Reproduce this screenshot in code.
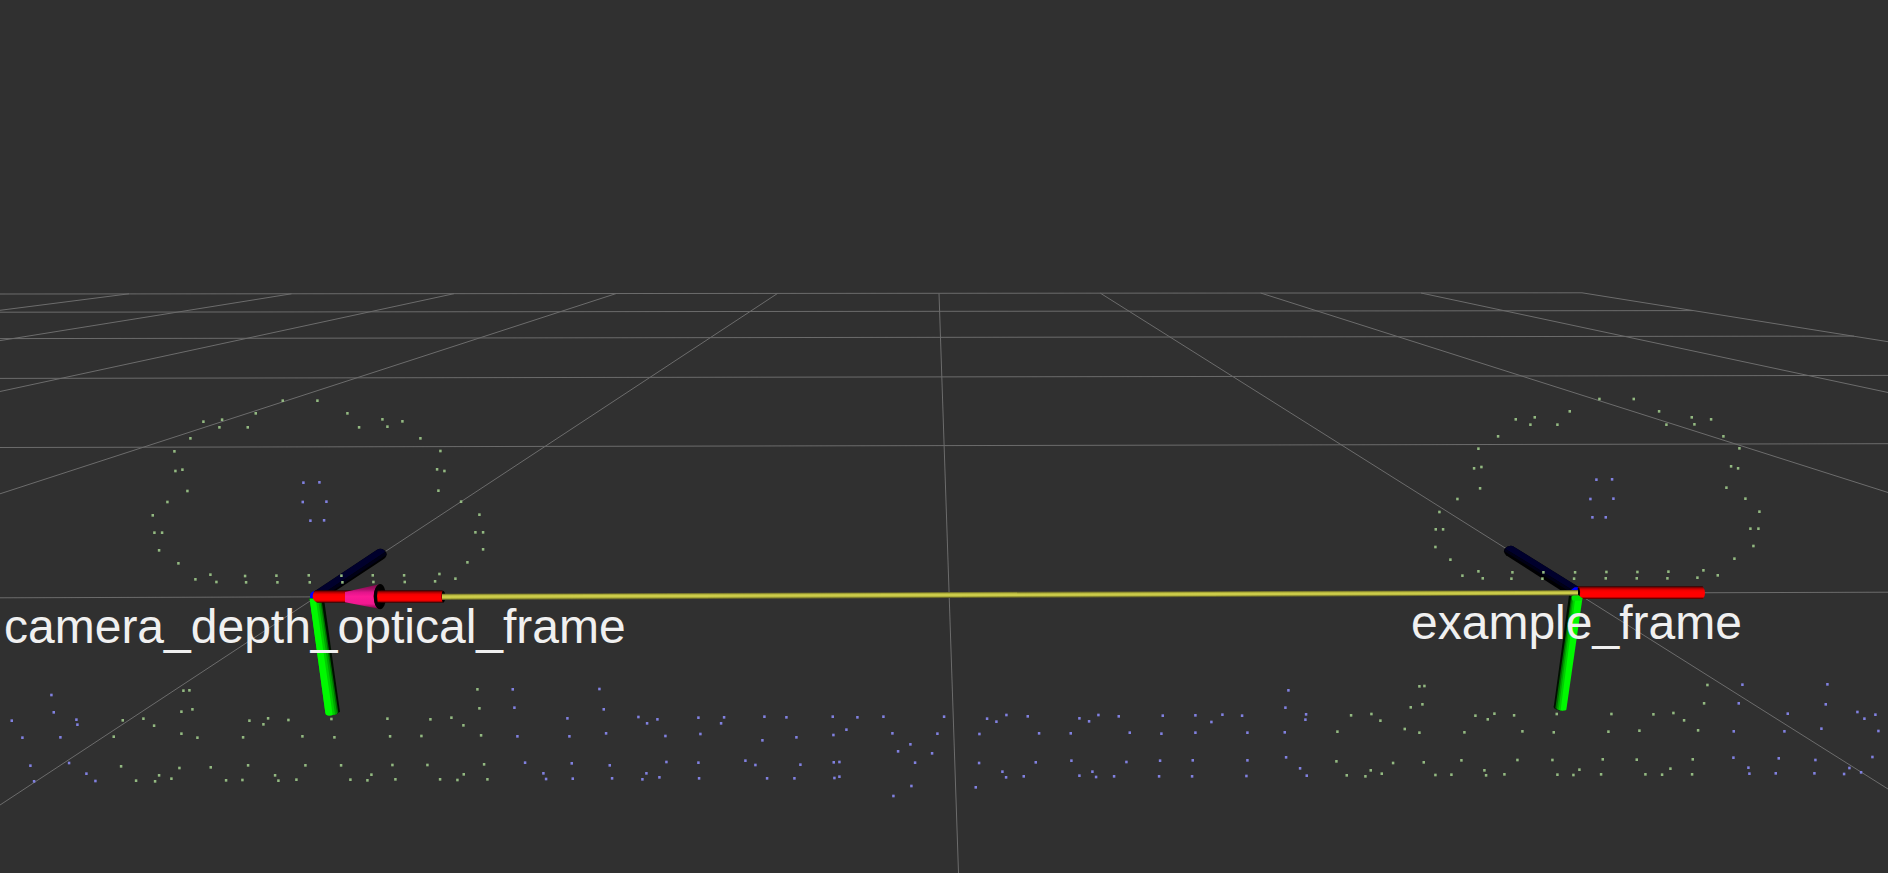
type Point = [number, number];

type Patch = {
  origin: Point;
  green: Point[];
  blue: Point[];
};

const GRID: [number, number, number, number][] = [
  // rows, far to near
  [0, 294, 1582, 292.8],
  [0, 312.2, 1693, 310.6],
  [0, 338.6, 1854, 336.1],
  [0, 378.4, 1888, 375.4],
  [0, 447.5, 1888, 443.7],
  [0, 597.8, 1888, 592.2],
  // columns, left to right
  [129, 293.8, 0, 310.3],
  [291.5, 293.8, 0, 340.6],
  [454, 293.7, 0, 391.5],
  [616, 293.6, 0, 493.8],
  [777.6, 293.4, 0, 805],
  [939, 293.3, 958.5, 873],
  [1100.4, 293.2, 1888, 789],
  [1260.6, 293, 1888, 492.5],
  [1421, 293, 1888, 392.5],
  [1582, 292.8, 1888, 341.7],
];

// Samples are stored in thirds of a pixel from the patch origin.
const PATCHES: Patch[] = [
  {
    origin: [130, 380],
    green: [
      [458, 62], [562, 62], [377, 100], [276, 119], [220, 125], [268, 142], [353, 142], [181, 175],
      [652, 100], [687, 142], [757, 118], [772, 140], [817, 124], [871, 175], [133, 214], [931, 213],
      [136, 273], [157, 269], [921, 268], [943, 273], [172, 333], [925, 332], [112, 366], [993, 365],
      [68, 406], [1048, 404], [73, 458], [96, 458], [1036, 457], [1059, 457], [87, 511], [1059, 508],
      [145, 550], [1012, 547], [196, 598], [241, 584], [259, 606], [345, 588], [348, 607], [439, 587],
      [442, 607], [536, 586], [539, 607], [634, 587], [637, 607], [728, 586], [730, 606], [822, 586],
      [824, 606], [928, 582], [915, 604], [976, 596],
    ],
    blue: [[520, 308], [568, 307], [518, 366], [589, 365], [541, 422], [582, 421]],
  },
  {
    origin: [1400, 380],
    green: [
      [598, 57], [701, 57], [509, 94], [404, 112], [347, 118], [391, 134], [472, 134], [294, 169],
      [777, 94], [799, 134], [875, 112], [883, 133], [933, 118], [970, 169], [235, 206], [1018, 205],
      [222, 265], [244, 261], [993, 259], [1014, 265], [240, 325], [979, 323], [172, 357], [1036, 356],
      [118, 396], [1078, 395], [107, 448], [129, 448], [1051, 446], [1075, 446], [106, 501], [1060, 498],
      [151, 539], [1003, 536], [187, 587], [235, 574], [248, 595], [337, 577], [334, 596], [430, 577],
      [427, 596], [525, 577], [522, 596], [619, 576], [617, 595], [712, 576], [710, 595], [805, 575],
      [802, 595], [910, 571], [892, 593], [953, 586],
    ],
    blue: [[589, 299], [636, 298], [571, 357], [640, 356], [577, 412], [617, 412]],
  },
  {
    origin: [0, 670],
    green: [
      [550, 62], [568, 61], [544, 125], [577, 118], [368, 151], [430, 146], [462, 167], [544, 191],
      [341, 200], [592, 203], [748, 152], [790, 163], [804, 145], [865, 150], [994, 147], [1162, 146],
      [1291, 148], [1354, 143], [1390, 166], [729, 202], [907, 199], [1003, 202], [1170, 199], [1264, 198],
      [363, 289], [538, 294], [632, 292], [744, 286], [916, 286], [1023, 286], [1177, 285], [1282, 285],
      [408, 332], [465, 334], [477, 316], [514, 326], [678, 331], [727, 330], [825, 316], [835, 332],
      [889, 329], [1051, 329], [1102, 331], [1114, 314], [1186, 328], [1320, 328], [1372, 330], [1391, 313],
    ],
    blue: [
      [154, 75], [161, 127], [35, 152], [229, 149], [232, 164], [67, 203], [181, 202], [91, 287],
      [207, 279], [102, 334], [259, 311], [286, 333],
    ],
  },
  {
    origin: [470, 670],
    green: [[22, 58], [28, 115], [33, 196], [42, 283], [52, 328]],
    blue: [
      [128, 58], [133, 113], [388, 57], [401, 118], [292, 145], [505, 141], [531, 160], [562, 148],
      [685, 143], [762, 142], [753, 160], [883, 140], [949, 142], [1088, 140], [1162, 142], [1240, 140],
      [1422, 140], [1129, 179], [142, 199], [298, 199], [408, 190], [586, 198], [691, 192], [877, 211],
      [979, 202], [1090, 195], [1267, 190], [1402, 191], [1321, 223], [1284, 244], [1386, 250], [165, 278],
      [305, 280], [419, 286], [589, 276], [685, 278], [826, 272], [856, 285], [991, 284], [1091, 277],
      [1108, 276], [1335, 278], [220, 310], [228, 327], [308, 326], [426, 325], [517, 328], [529, 310],
      [568, 322], [687, 325], [891, 325], [973, 325], [1093, 324], [1108, 320], [1324, 348], [1270, 378],
    ],
  },
  {
    origin: [940, 670],
    green: [
      [1233, 136], [1294, 132], [1321, 152], [1192, 185], [1189, 274], [1220, 316], [1276, 319], [1292, 301],
      [1325, 311], [1359, 279],
    ],
    blue: [
      [141, 146], [169, 155], [199, 135], [263, 139], [418, 145], [447, 154], [475, 135], [536, 139],
      [668, 137], [766, 136], [814, 156], [847, 134], [906, 137], [1045, 61], [1036, 113], [1098, 133],
      [1096, 149], [118, 192], [297, 190], [392, 190], [569, 188], [664, 191], [766, 188], [922, 188],
      [1034, 187], [117, 279], [287, 277], [394, 272], [559, 276], [660, 272], [758, 271], [922, 271],
      [1038, 262], [187, 305], [198, 322], [251, 319], [418, 317], [457, 305], [468, 321], [522, 319],
      [657, 319], [756, 319], [919, 318], [1080, 295], [1100, 317], [107, 352],
    ],
  },
  {
    origin: [1400, 670],
    green: [
      [58, 49], [73, 48], [32, 112], [67, 103], [14, 177], [58, 188], [71, 277], [106, 315],
      [154, 314], [226, 137], [263, 148], [283, 131], [342, 136], [470, 132], [634, 132], [760, 133],
      [820, 129], [852, 151], [193, 187], [367, 184], [461, 187], [625, 185], [718, 182], [894, 181],
      [912, 100], [922, 45], [184, 271], [352, 270], [457, 270], [608, 268], [710, 269], [878, 268],
      [253, 301], [258, 316], [313, 313], [472, 314], [520, 315], [538, 299], [603, 313], [736, 313],
      [786, 314], [811, 296], [876, 313],
    ],
    blue: [
      [1027, 44], [1016, 100], [1282, 43], [1277, 103], [1163, 131], [1372, 126], [1393, 146], [1426, 134],
      [1001, 184], [1153, 184], [1264, 176], [1435, 183], [1000, 263], [1136, 265], [1246, 270], [1417, 261],
      [1045, 293], [1048, 311], [1127, 310], [1243, 310], [1348, 294], [1332, 312], [1383, 307],
    ],
  },
];

function GroundGrid() {
  return (
    <g className="stroke-[#6c6c6c]" strokeWidth="1">
      {GRID.map(([x1, y1, x2, y2], i) => (
        <line key={i} x1={x1} y1={y1} x2={x2} y2={y2} />
      ))}
    </g>
  );
}

function Samples({ points }: { points: Point[] }) {
  return (
    <>
      {points.map(([x, y]) => (
        <rect key={`${x},${y}`} x={x - 3.5} y={y - 4} width="7.5" height="8" />
      ))}
    </>
  );
}

function PointCloud() {
  return (
    <>
      {PATCHES.map(({ origin, green, blue }) => (
        <g key={origin.join()} transform={`translate(${origin[0]} ${origin[1]}) scale(${1 / 3})`}>
          <g className="fill-[#93b981]">
            <Samples points={green} />
          </g>
          <g className="fill-[#8181e0]">
            <Samples points={blue} />
          </g>
        </g>
      ))}
    </>
  );
}

function Gradients() {
  return (
    <defs>
      <linearGradient id="red" x1="0" y1="0" x2="0" y2="1">
        <stop offset="0" stopColor="#300000" />
        <stop offset="0.09" stopColor="#7c0000" />
        <stop offset="0.2" stopColor="#c40000" />
        <stop offset="0.34" stopColor="#f40000" />
        <stop offset="0.5" stopColor="#ff0000" />
        <stop offset="0.8" stopColor="#ff0000" />
        <stop offset="0.9" stopColor="#b00000" />
        <stop offset="1" stopColor="#300000" />
      </linearGradient>
      <linearGradient id="cone" x1="0" y1="0" x2="0" y2="1">
        <stop offset="0" stopColor="#7a0a46" />
        <stop offset="0.2" stopColor="#a81068" />
        <stop offset="0.32" stopColor="#e0148a" />
        <stop offset="0.5" stopColor="#fc1a96" />
        <stop offset="0.8" stopColor="#f01890" />
        <stop offset="0.9" stopColor="#b8106c" />
        <stop offset="1" stopColor="#6a0840" />
      </linearGradient>
    </defs>
  );
}

function CameraAxes() {
  return (
    <g transform={`translate(280 530) scale(${1 / 3})`}>
      <path d="M96 189 L290 60 Q301 53 312 60 Q323 68 319 78 Q317 84 308 89 L165 184 L110 200 Z" fill="#000002" />
      <path d="M96 189 L290 60 Q301 53 312 60 L316 66 L124 194 Z" fill="#00002c" />
      <path d="M124 194 L316 66 L320 74 L140 194 Z" fill="#000016" />
      <path d="M90 196 Q92 185 103 184 L106 206 L90 206 Z" fill="#0000ff" />
      <path d="M89 206 L128 206 L133 214 L180 545 L170 552 L138 553 Z" fill="#001000" />
      <path d="M89 206 L124 206 L175 548 L168 554 L140 556 Z" fill="#006c00" />
      <path d="M89 206 L120 206 L171 551 L164 555 L140 556 Z" fill="#00a400" />
      <path d="M89 206 L114 206 L165 553 Q150 558 140 555 Q136 554 136 548 Z" fill="#00cf00" />
      <path d="M89 206 L107 206 L158 555 Q148 558 140 555 Q137 554 136 548 Z" fill="#00f900" />
      <ellipse cx="301" cy="200" rx="17" ry="38" fill="#000" />
      <ellipse cx="489" cy="200" rx="7" ry="18" fill="#000" />
      <path d="M106 181 H488 Q481 199 488 218 H112 Q98 212 98 198 Q99 188 106 181 Z" fill="url(#red)" />
      <path d="M195 186 L298 163 Q282 170 281 199 Q282 231 296 236 L195 217 Z" fill="url(#cone)" />
      <path d="M298 162 Q282 170 281 199 Q282 232 298 238 L302 218 H293 Q289 199 293 181 H302 Z" fill="#050003" />
    </g>
  );
}

function ExampleAxes() {
  return (
    <g transform={`translate(1390 530) scale(${1 / 3})`}>
      <path d="M368 48 L567 172 L545 186 L514 182 L348 76 Q338 66 344 56 Q353 45 368 48 Z" fill="#000002" />
      <path d="M368 48 L567 172 L548 181 L345 56 Q355 45 368 48 Z" fill="#00002c" />
      <path d="M345 56 L548 181 L535 182 L342 63 Z" fill="#000016" />
      <path d="M543 180 L554 172 L565 172 L566 190 L550 190 Z" fill="#0000ff" />
      <path d="M537 196 L492 525 Q488 534 497 538 L510 542 L560 205 Z" fill="#001000" />
      <path d="M544 196 L496 535 L512 542 L564 205 Z" fill="#006c00" />
      <path d="M547 198 L501 538 L512 542 L566 205 Z" fill="#00a400" />
      <path d="M551 198 L506 539 Q514 543 520 542 L570 205 Z" fill="#00cf00" />
      <path d="M557 196 L512 540 Q524 544 529 539 L578 200 Z" fill="#00f900" />
      <path d="M545 204 Q545 193 561 193 Q578 194 578 205 L574 212 L548 212 Z" fill="#00e400" />
      <path d="M564 169 H938 Q946 180 945 190 Q944 203 938 207 H580 L566 196 Z" fill="url(#red)" />
      <path d="M563 173 H568 Q572 185 569 198 L564 194 Z" fill="#000" />
    </g>
  );
}

function ParentArrow() {
  return (
    <g>
      <path d="M442 593.7 L1578 590 V595.4 L442 600 Z" fill="#66662a" />
      <path d="M442 594.5 L1578 590.8 V594.6 L442 599 Z" fill="#a9a93a" />
      <path d="M442 595.6 L1578 591.7 V594 L442 598 Z" fill="#cccc4a" />
    </g>
  );
}

export default function App() {
  return (
    <main className="min-h-screen bg-[#303030]">
      <svg viewBox="0 0 1888 873" className="block h-auto w-full" role="group">
        <Gradients />
        <GroundGrid />
        <CameraAxes />
        <ExampleAxes />
        <ParentArrow />
        <PointCloud />
        <g className="fill-[#f0f0f0] font-['Liberation_Sans',Arial,sans-serif] text-5xl">
          <text x="4" y="643">camera_depth_optical_frame</text>
          <text x="1411" y="639">example_frame</text>
        </g>
      </svg>
    </main>
  );
}
